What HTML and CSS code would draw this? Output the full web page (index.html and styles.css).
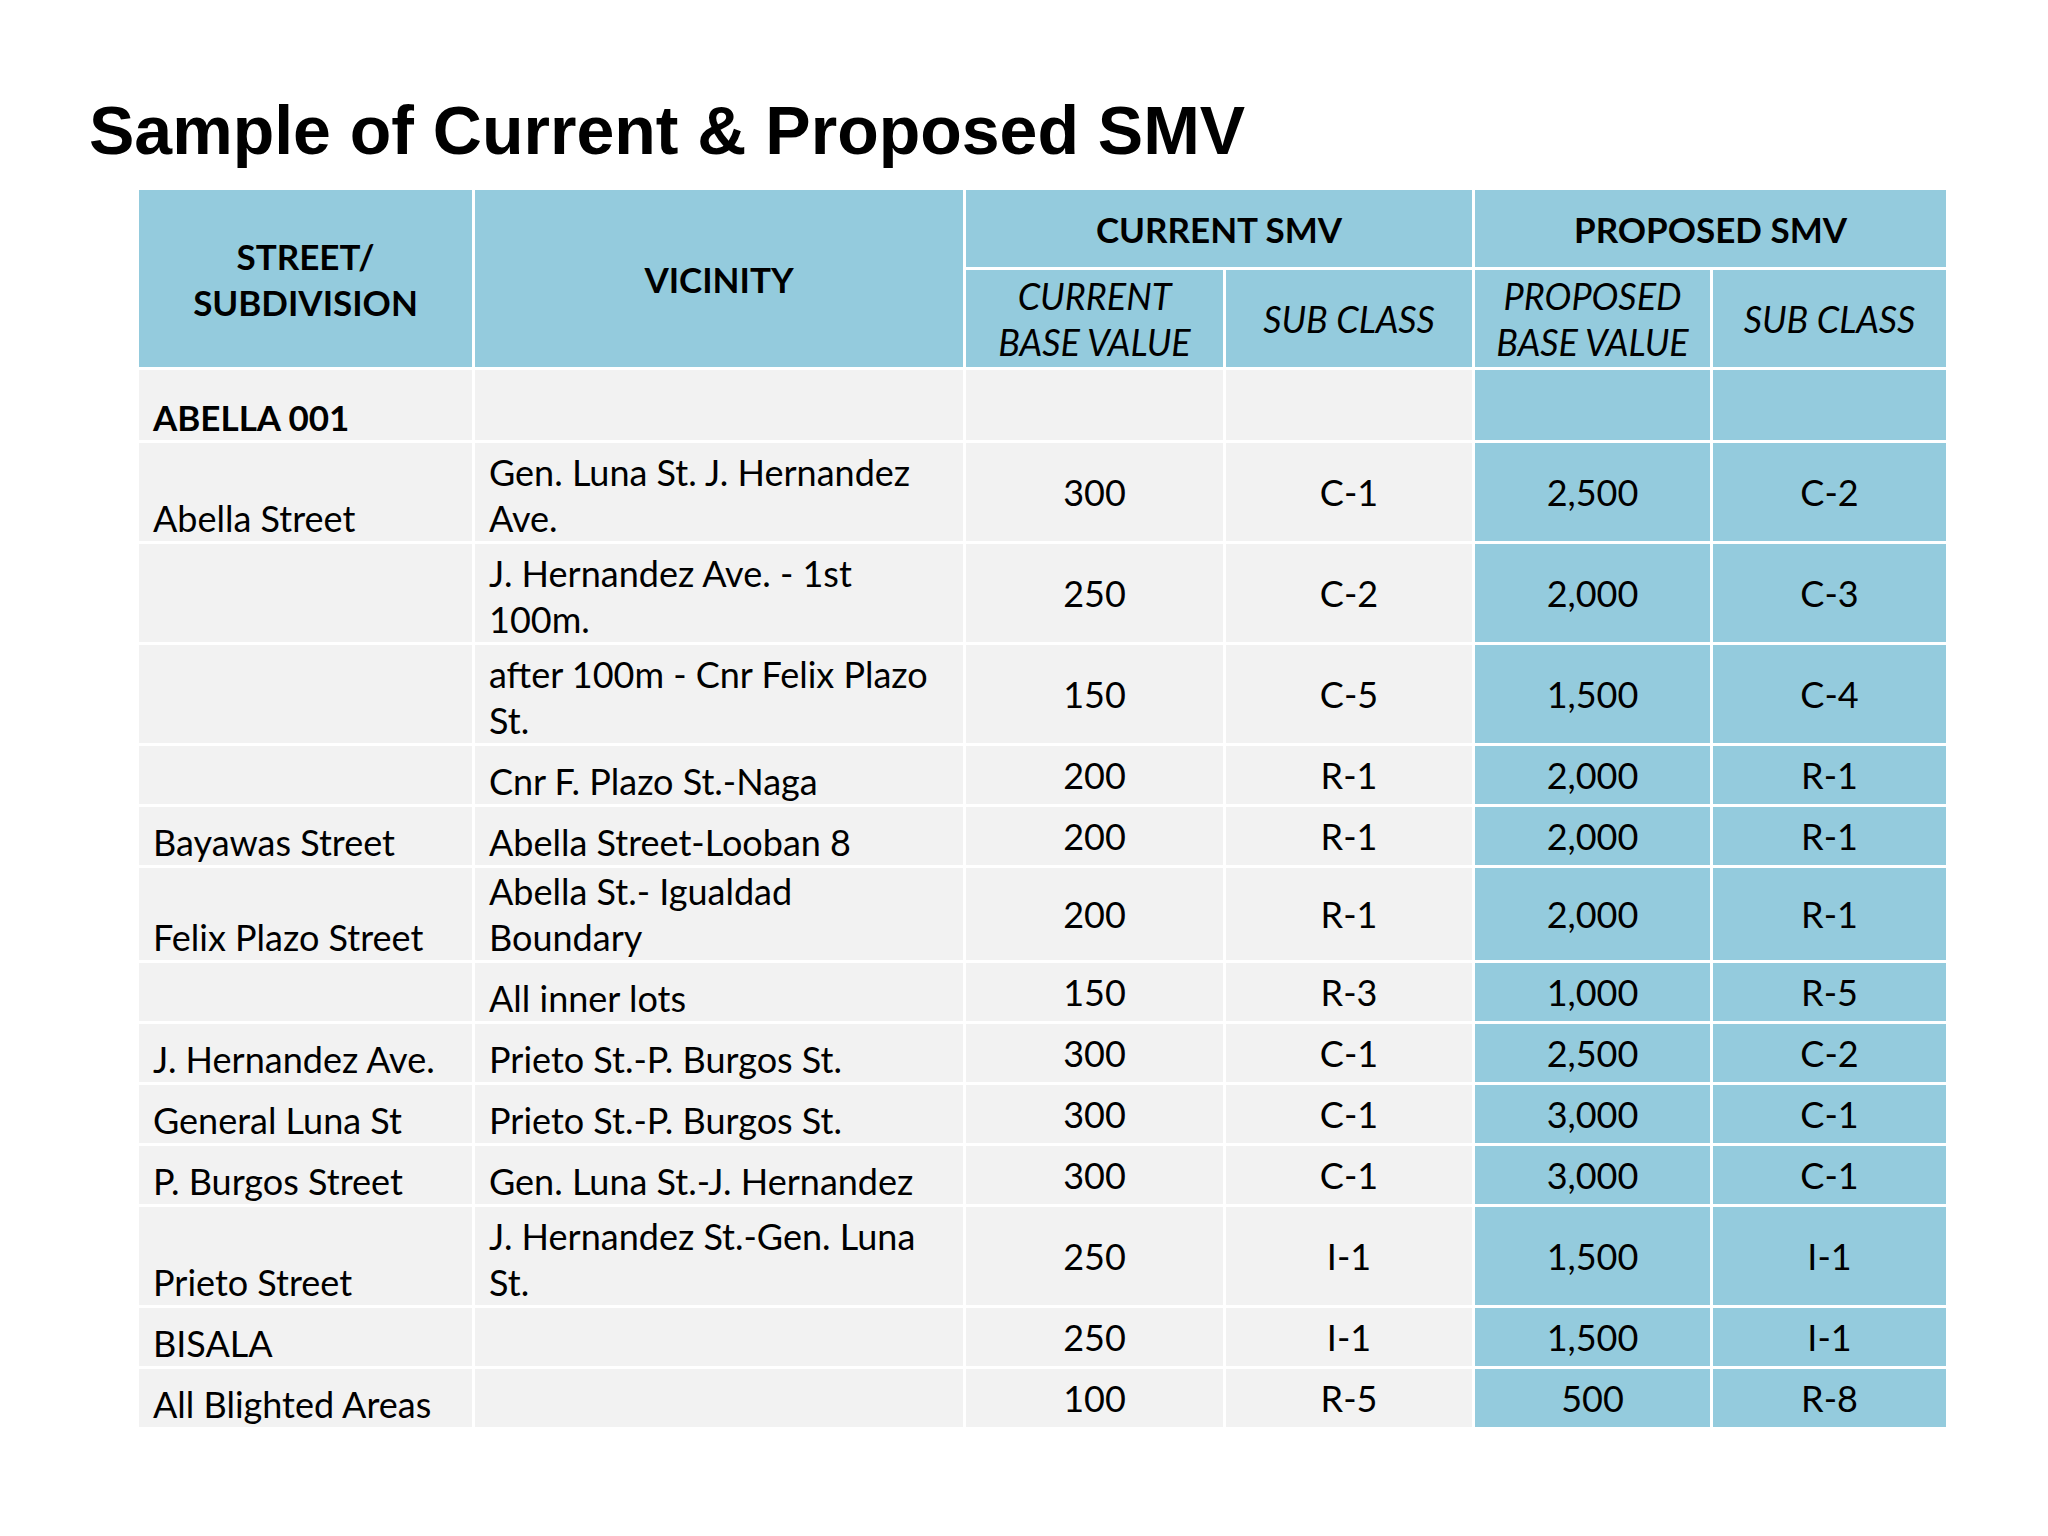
FILE: index.html
```html
<!DOCTYPE html>
<html>
<head>
<meta charset="utf-8">
<link rel="stylesheet" href="styles.css">
</head>
<body>
<div class="slide">
  <h1 class="title">Sample of Current &amp; Proposed SMV</h1>
  <table class="smv">
    <colgroup>
      <col class="c-street">
      <col class="c-vic">
      <col class="c-cbv">
      <col class="c-csc">
      <col class="c-pbv">
      <col class="c-psc">
    </colgroup>
    <thead>
      <tr class="h-top">
        <th rowspan="2" class="hb">STREET/<br>SUBDIVISION</th>
        <th rowspan="2" class="hb">VICINITY</th>
        <th colspan="2" class="hb">CURRENT SMV</th>
        <th colspan="2" class="hb">PROPOSED SMV</th>
      </tr>
      <tr class="h-sub">
        <th class="hi">CURRENT<br>BASE VALUE</th>
        <th class="hi">SUB CLASS</th>
        <th class="hi">PROPOSED<br>BASE VALUE</th>
        <th class="hi">SUB CLASS</th>
      </tr>
    </thead>
    <tbody>
      <tr class="r-ab">
        <td class="tx strong">ABELLA 001</td><td class="tx"></td>
        <td class="num"></td><td class="num"></td><td class="num p"></td><td class="num p"></td>
      </tr>
      <tr class="r2">
        <td class="tx">Abella Street</td><td class="tx">Gen. Luna St. J. Hernandez Ave.</td>
        <td class="num">300</td><td class="num">C-1</td><td class="num p">2,500</td><td class="num p">C-2</td>
      </tr>
      <tr class="r2">
        <td class="tx"></td><td class="tx">J. Hernandez Ave. - 1st 100m.</td>
        <td class="num">250</td><td class="num">C-2</td><td class="num p">2,000</td><td class="num p">C-3</td>
      </tr>
      <tr class="r2">
        <td class="tx"></td><td class="tx">after 100m - Cnr Felix Plazo St.</td>
        <td class="num">150</td><td class="num">C-5</td><td class="num p">1,500</td><td class="num p">C-4</td>
      </tr>
      <tr class="r1">
        <td class="tx"></td><td class="tx">Cnr F. Plazo St.-Naga</td>
        <td class="num">200</td><td class="num">R-1</td><td class="num p">2,000</td><td class="num p">R-1</td>
      </tr>
      <tr class="r1">
        <td class="tx">Bayawas Street</td><td class="tx">Abella Street-Looban 8</td>
        <td class="num">200</td><td class="num">R-1</td><td class="num p">2,000</td><td class="num p">R-1</td>
      </tr>
      <tr class="r2s">
        <td class="tx">Felix Plazo Street</td><td class="tx">Abella St.- Igualdad Boundary</td>
        <td class="num">200</td><td class="num">R-1</td><td class="num p">2,000</td><td class="num p">R-1</td>
      </tr>
      <tr class="r1">
        <td class="tx"></td><td class="tx">All inner lots</td>
        <td class="num">150</td><td class="num">R-3</td><td class="num p">1,000</td><td class="num p">R-5</td>
      </tr>
      <tr class="r1">
        <td class="tx">J. Hernandez Ave.</td><td class="tx">Prieto St.-P. Burgos St.</td>
        <td class="num">300</td><td class="num">C-1</td><td class="num p">2,500</td><td class="num p">C-2</td>
      </tr>
      <tr class="r1">
        <td class="tx">General Luna St</td><td class="tx">Prieto St.-P. Burgos St.</td>
        <td class="num">300</td><td class="num">C-1</td><td class="num p">3,000</td><td class="num p">C-1</td>
      </tr>
      <tr class="r1">
        <td class="tx">P. Burgos Street</td><td class="tx">Gen. Luna St.-J. Hernandez</td>
        <td class="num">300</td><td class="num">C-1</td><td class="num p">3,000</td><td class="num p">C-1</td>
      </tr>
      <tr class="r2">
        <td class="tx">Prieto Street</td><td class="tx">J. Hernandez St.-Gen. Luna St.</td>
        <td class="num">250</td><td class="num">I-1</td><td class="num p">1,500</td><td class="num p">I-1</td>
      </tr>
      <tr class="r1">
        <td class="tx">BISALA</td><td class="tx"></td>
        <td class="num">250</td><td class="num">I-1</td><td class="num p">1,500</td><td class="num p">I-1</td>
      </tr>
      <tr class="r1">
        <td class="tx">All Blighted Areas</td><td class="tx"></td>
        <td class="num">100</td><td class="num">R-5</td><td class="num p">500</td><td class="num p">R-8</td>
      </tr>
    </tbody>
  </table>
</div>
</body>
</html>
```

FILE: styles.css
```css
html, body {
  margin: 0;
  padding: 0;
  background: #ffffff;
}

.slide {
  width: 2048px;
  height: 1536px;
  box-sizing: border-box;
  padding: 96px 0 0 89px;
}

.title {
  margin: 0 0 23px 0;
  font-family: "Liberation Sans", Arial, sans-serif;
  font-weight: 700;
  font-size: 68px;
  line-height: 68px;
  color: #000000;
}

.smv {
  margin-left: 47px;
  width: 1810px;
  table-layout: fixed;
  border-collapse: collapse;
  font-family: Lato, "Open Sans", sans-serif;
  font-size: 36px;
  line-height: 46px;
  color: #000000;
}

.c-street { width: 336px; }
.c-vic { width: 491px; }
.c-cbv { width: 260px; }
.c-csc { width: 249px; }
.c-pbv { width: 238px; }
.c-psc { width: 236px; }

.smv th,
.smv td {
  border: 3px solid #ffffff;
  padding: 0 20px 0 14px;
}

.smv th {
  background: #94cbdd;
  text-align: center;
  vertical-align: middle;
  padding: 0 14px;
}

.hb { font-weight: 700; font-size: 35px; }
.hi { font-weight: 400; font-style: italic; font-size: 36px; }

.h-top { height: 80px; }
.h-sub { height: 100px; }

.smv td {
  background: #f2f2f2;
}

.tx {
  text-align: left;
  vertical-align: bottom;
}

.strong { font-weight: 700; font-size: 35px; }

.smv td.num {
  text-align: center;
  vertical-align: middle;
  padding: 0 14px;
}

.smv td.p { background: #94cbdd; }

.r-ab { height: 73px; }
.r2 { height: 101px; }
.r2s { height: 93px; }
.r1 { height: 61px; }
```
